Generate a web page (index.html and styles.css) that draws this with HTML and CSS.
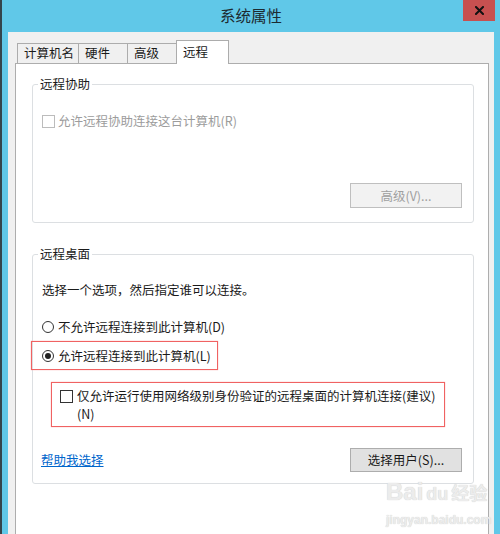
FILE: index.html
```html
<!DOCTYPE html>
<html lang="zh-CN">
<head>
<meta charset="utf-8">
<title>系统属性</title>
<link rel="stylesheet" href="styles.css">
</head>
<body>
<div class="window">
  <div class="titlebar">
    <span></span>
    <div class="title">系统属性</div>
    <div class="close">
      <svg width="9" height="9" viewBox="0 0 9 9"><path d="M1 1L8 8M8 1L1 8" stroke="#111" stroke-width="2" stroke-linecap="square"/></svg>
    </div>
  </div>
  <div class="dialog">
    <div class="tabs">
      <div class="tab">计算机名</div>
      <div class="tab">硬件</div>
      <div class="tab">高级</div>
      <div class="tab active">远程</div>
    </div>
    <div class="panel">
      <div class="group g1">
        <div class="group-title">远程协助</div>
        <div class="row disabled"><span class="cb off"></span><span>允许远程协助连接这台计算机(R)</span></div>
        <div class="btn disabled-btn">高级(V)...</div>
      </div>
      <div class="group g2">
        <div class="group-title">远程桌面</div>
        <div class="desc">选择一个选项，然后指定谁可以连接。</div>
        <div class="row r-d"><span class="radio"></span><span>不允许远程连接到此计算机(D)</span></div>
        <div class="mark mark1">
          <div class="row"><span class="radio on"></span><span>允许远程连接到此计算机(L)</span></div>
        </div>
        <div class="mark mark2">
          <span class="cb"></span>
          <span class="nla">仅允许运行使用网络级别身份验证的远程桌面的计算机连接(建议)<br>(N)</span>
        </div>
        <div class="bottom">
          <a class="link" href="#">帮助我选择</a>
          <div class="btn">选择用户(S)...</div>
        </div>
      </div>
    </div>
  </div>
  <div class="watermark">
    <div class="wm-logo">Bai<span class="wm-du">du</span><span class="wm-cn">经验</span></div>
    <div class="wm-url">jingyan.baidu.com</div>
  </div>
</div>
</body>
</html>
```

FILE: styles.css
```css
html, body {
  margin: 0;
  padding: 0;
}
body {
  width: 500px;
  height: 534px;
  overflow: hidden;
  font-family: "Noto Sans CJK SC", "Noto Sans", sans-serif;
  font-size: 12.5px;
  color: #1a1a1a;
}
.window {
  position: relative;
  box-sizing: border-box;
  height: 534px;
  display: flex;
  flex-direction: column;
  background: #60c8e8;
  border-left: 2px solid #34454c;
}
.titlebar {
  height: 32px;
  display: grid;
  grid-template-columns: 1fr auto 1fr;
}
.title {
  font-size: 15.5px;
  line-height: 30px;
  color: #1c2a30;
}
.close {
  justify-self: end;
  align-self: start;
  width: 32px;
  height: 21px;
  margin-right: 5px;
  background: #c75050;
  display: flex;
  align-items: center;
  justify-content: center;
}
.dialog {
  flex: 1;
  margin: 0 6px;
  padding: 8px 5px 0 7px;
  background: #f0f0f0;
  display: flex;
  flex-direction: column;
  min-height: 0;
}
.tabs {
  display: flex;
  align-items: flex-end;
  height: 24px;
  margin: 0 0 -1px 2px;
  position: relative;
  z-index: 1;
}
.tab {
  box-sizing: border-box;
  min-width: 50px;
  height: 20px;
  margin-bottom: 1px;
  padding: 0 4px 0 6px;
  border: 1px solid #acacac;
  border-bottom: none;
  background: #f0f0f0;
  line-height: 18px;
  white-space: nowrap;
}
.tab + .tab {
  margin-left: -1px;
}
.tab.active {
  min-width: 53px;
  height: 24px;
  margin-bottom: 0;
  padding-top: 3px;
  line-height: 16px;
  background: #fff;
}
.panel {
  flex: 1;
  background: #fff;
  border: 1px solid #adadad;
  border-bottom: none;
  padding: 20px 14px 0 16px;
}
.group {
  border: 1px solid #dcdfe2;
  border-radius: 3px;
  display: flex;
  flex-direction: column;
  align-items: flex-start;
}
.g1 {
  padding: 0 11px 14px 9px;
}
.g2 {
  margin-top: 31px;
  padding: 0 11px 11px 9px;
}
.group-title {
  margin: -9px 0 0 -4px;
  padding: 0 2px;
  background: #fff;
  line-height: 16px;
  height: 16px;
}
.row {
  display: flex;
  align-items: center;
  gap: 3px;
  height: 16px;
  line-height: 16px;
  white-space: nowrap;
}
.g1 .row {
  margin-top: 21px;
}
.disabled {
  color: #9c9c9c;
}
.cb {
  box-sizing: border-box;
  flex: none;
  width: 13px;
  height: 13px;
  border: 1px solid #333;
  background: #fff;
}
.cb.off {
  border-color: #bcbcbc;
}
.radio {
  box-sizing: border-box;
  flex: none;
  width: 12px;
  height: 12px;
  margin-right: 1px;
  border: 1px solid #333;
  border-radius: 50%;
  background: #fff;
  display: flex;
  align-items: center;
  justify-content: center;
}
.radio.on::after {
  content: "";
  width: 6px;
  height: 6px;
  border-radius: 50%;
  background: #222;
}
.btn {
  box-sizing: border-box;
  width: 112px;
  height: 24px;
  border: 1px solid #adadad;
  background: #e1e1e1;
  text-align: center;
  line-height: 22px;
  white-space: nowrap;
}
.g1 .btn {
  align-self: flex-end;
  margin-top: 54px;
  height: 25px;
  line-height: 23px;
}
.disabled-btn {
  background: #f2f2f2;
  border-color: #bfbfbf;
  color: #a0a0a0;
}
.desc {
  margin-top: 20px;
  line-height: 16px;
  white-space: nowrap;
}
.r-d {
  margin-top: 21px;
}
.mark {
  box-sizing: border-box;
  border: 1px solid #f06262;
  box-shadow: 0 0 1px #f59a9a;
}
.mark1 {
  width: 187px;
  margin: 6px 0 0 -11px;
  padding: 6px 0 5px 10px;
}
.mark2 {
  width: 394px;
  margin: 12px 0 0 9px;
  padding: 4px 0 3px 8px;
  display: flex;
  align-items: flex-start;
  gap: 4px;
}
.mark2 .cb {
  margin-top: 3px;
}
.nla {
  line-height: 18px;
  white-space: nowrap;
}
.bottom {
  align-self: stretch;
  margin-top: 21px;
  display: flex;
  justify-content: space-between;
  align-items: center;
}
.link {
  color: #0066cc;
  text-decoration: underline;
  line-height: 16px;
  margin-left: -1px;
}
.watermark {
  position: absolute;
  left: 384px;
  top: 478px;
  color: #ececec;
  font-family: "Liberation Sans", Arial, sans-serif;
  font-weight: bold;
  text-shadow: 0 0 1px #c4c4c4;
  pointer-events: none;
}
.wm-logo {
  font-size: 24px;
  line-height: 28px;
  white-space: nowrap;
}
.wm-du {
  font-size: 18px;
  margin-left: 3px;
}
.wm-cn {
  font-family: "Noto Sans CJK SC", sans-serif;
  font-size: 18px;
  margin-left: 3px;
}
.wm-url {
  font-size: 12px;
  line-height: 16px;
  margin-top: 4px;
}
```
